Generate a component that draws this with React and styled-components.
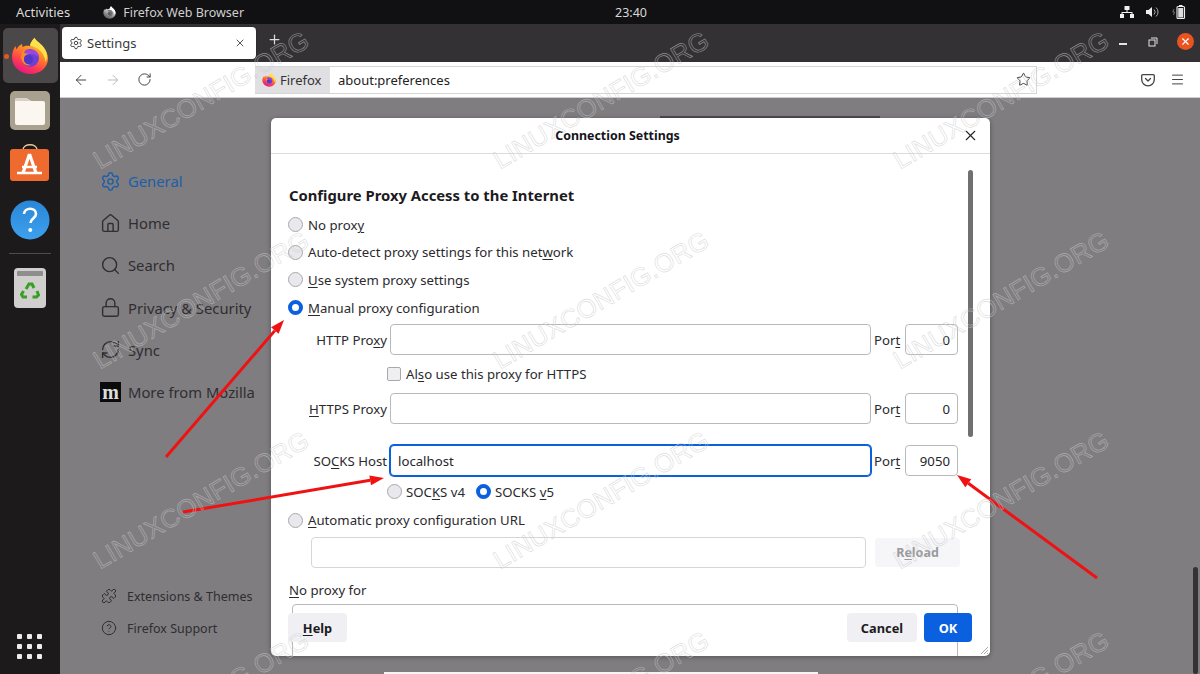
import React from "react";
import styled, { createGlobalStyle } from "styled-components";
import { Settings, House, Search, Lock, Puzzle, CircleHelp, ArrowLeft, ArrowRight, RotateCw, X, Plus, Star, Menu, RefreshCw } from "lucide-react";

const Global = createGlobalStyle`
  html, body { margin: 0; padding: 0; background: #111; }
  body { font-family: "Noto Sans", sans-serif; }
  * { box-sizing: border-box; }
  u { text-underline-offset: 2px; text-decoration-thickness: 1px; }
`;

const Screen = styled.div`
  position: relative; width: 1200px; height: 674px; overflow: hidden;
  display: flex; flex-direction: column; background: #7f7d80;
`;
const TopBar = styled.header`
  height: 24px; flex: none; background: #111012; color: #d8d8d8;
  display: grid; grid-template-columns: 1fr 1fr 1fr; align-items: center; font-size: 13px; padding: 0 14px 0 16px;
`;
const TopLeft = styled.div`display: flex; align-items: center; gap: 0;`;
const AppName = styled.div`display: flex; align-items: center; gap: 7px; margin-left: 33px; color: #cfcfcf; font-size: 12.5px;`;
const Clock = styled.div`text-align: center; padding-left: 60px; font-size: 12.5px;`;
const TopRight = styled.div`display: flex; justify-content: flex-end; align-items: center; gap: 12px; color: #eee;`;
const Row = styled.div`flex: 1; min-height: 0; display: flex;`;

const Dock = styled.nav`
  width: 60px; flex: none; background: #1c1a1b; display: flex; flex-direction: column; align-items: center; position: relative;
  padding-top: 4px;
`;
const ActiveTile = styled.div`
  width: 55px; height: 55px; border-radius: 5px; background: #4a4849; display: flex; align-items: center; justify-content: center; position: relative;
  &::before { content: ""; position: absolute; left: 1px; top: 26px; width: 5px; height: 5px; border-radius: 50%; background: #e95420; }
`;
const DockIcon = styled.div`margin-top: ${p => p.$top}px; display: flex; line-height: 0;`;
const DockRule = styled.div`width: 42px; height: 1px; background: #4e4c4d; margin-top: 13px;`;
const AppGrid = styled.div`
  position: absolute; left: 17px; bottom: 15px; display: grid; grid-template-columns: repeat(3, 5px); gap: 5px;
  span { width: 5px; height: 5px; background: #eee; border-radius: 1px; }
`;

const Browser = styled.div`flex: 1; min-width: 0; display: flex; flex-direction: column;`;
const TabStrip = styled.div`height: 38px; flex: none; background: #333134; display: flex; align-items: flex-start; padding: 3px 0 0 2px; color: #ddd;`;
const Tab = styled.div`
  width: 194px; height: 32px; background: #fff; border-radius: 4px; display: flex; align-items: center; padding: 0 10px 0 7px; gap: 4px;
  font-size: 13px; color: #3a3a3a; box-shadow: 0 0 2px rgba(0,0,0,.4);
`;
const TabTitle = styled.span`flex: 1;`;
const NewTab = styled.div`margin: 5px 0 0 11px; display: flex;`;
const WindowControls = styled.div`margin: 6px 6px 0 auto; display: flex; align-items: center; gap: 18px; color: #e4e4e4;`;
const MinBar = styled.div`width: 8px; height: 1.500px; background: #e4e4e4; margin: 5px 2px 0 0;`;
const CloseDot = styled.div`width: 17px; height: 17px; border-radius: 50%; background: #e95420; color: #fff; display: flex; align-items: center; justify-content: center;`;
const RestoreIcon = styled.div`width: 12px; height: 12px; display: flex;`;
const Toolbar = styled.div`
  height: 36px; flex: none; background: #fff; display: flex; align-items: center; padding: 0 15px 0 13px; color: #444; border-bottom: 1px solid #cfcfd2;
`;
const NavGroup = styled.div`display: flex; align-items: center; gap: 16px; width: 182px;`;
const UrlBar = styled.div`
  width: 782px; height: 28px; border: 1px solid #d5d5d8; border-left: 0; display: flex; align-items: stretch; font-size: 13px; color: #222; position: relative;
`;
const Identity = styled.div`width: 75px; background: #e0e0e3; display: flex; align-items: center; gap: 4px; padding-left: 7px; color: #333;`;
const UrlText = styled.div`display: flex; align-items: center; padding-left: 8px; flex: 1;`;
const StarWrap = styled.div`display: flex; align-items: center; padding-right: 5px; color: #333;`;
const ToolRight = styled.div`margin-left: auto; display: flex; align-items: center; gap: 15px;`;

const Content = styled.div`flex: 1; min-height: 0; display: flex; position: relative; background: #7f7d80;`;
const Sidebar = styled.aside`
  width: 210px; flex: none; padding: 62px 0 0 40px; display: flex; flex-direction: column; color: #2f2e31;
`;
const NavItem = styled.div`
  height: 42.200px; display: flex; align-items: center; gap: 7px; font-size: 14.800px; color: ${p => (p.$active ? "#1d5ea8" : "#2f2e31")};
`;
const MozMark = styled.span`
  width: 21px; height: 20px; background: #0b0b0b; color: #ddd; font: bold 20px/18px "Liberation Serif", serif; display: flex; align-items: center; justify-content: center;
`;
const SideFoot = styled.div`margin-top: auto; padding: 0 0 30px 1px; display: flex; flex-direction: column;`;
const FootItem = styled.div`height: 32px; display: flex; align-items: center; gap: 10px; font-size: 12.5px; color: #2f2e31;`;
const ScrollThumb = styled.div`position: absolute; right: 2px; bottom: 0; width: 5px; height: 107px; border-radius: 3px; background: #333;`;
const HiddenEdge = styled.div`position: absolute; left: 600px; top: 18px; width: 220px; height: 2px; background: #4e4c4f;`;
const BehindCard = styled.div`position: absolute; left: 324px; bottom: 0; width: 434px; height: 2px; background: #f4f4f4;`;

const Dialog = styled.section`
  position: absolute; left: 271px; top: 118px; width: 719px; height: 538px; background: #fff; border-radius: 5px; overflow: hidden;
  box-shadow: 0 1px 5px rgba(0,0,0,.35); color: #2b2a2e; font-size: 13.200px;
`;
const DialogHead = styled.div`
  height: 36px; border-bottom: 1px solid #dcdcdf; display: flex; align-items: center; justify-content: center; position: relative;
  font-size: 12.400px; font-weight: 700; color: #15141a; padding-right: 26px;
`;
const DialogClose = styled.div`position: absolute; right: 11px; top: 9px; display: flex; color: #222;`;
const DialogBody = styled.div`padding: 0 18px; display: flex; flex-direction: column; width: 100%;`;
const Heading = styled.h2`margin: 30px 0 0; height: 22px; font-size: 14.800px; line-height: 22px; font-weight: 700; color: #1c1b22;`;
const RadioRow = styled.label`display: flex; align-items: center; gap: 5px; height: ${p => p.$h || 27.6}px; margin: ${p => p.$top || 0}px 0 0 -1px;`;
const Radio = styled.span`
  width: 15px; height: 15px; flex: none; border-radius: 50%;
  border: ${p => (p.$on ? "4px solid #0a60df" : "1px solid #a9a9ad")};
  background: ${p => (p.$on ? "#fff" : "#e9e9ed")};
`;
const ProxyRow = styled.div`
  display: grid; grid-template-columns: 98px 481px 28px 53px; column-gap: 3px; align-items: center; height: 31px; margin-top: ${p => p.$top || 0}px;
`;
const RowLabel = styled.span`text-align: right; white-space: nowrap;`;
const TextBox = styled.div`
  height: ${p => p.$h || 31}px; border: 1px solid ${p => (p.$focus ? "#0a60df" : "#b9b9bd")}; border-radius: 4px; background: #fff;
  display: flex; align-items: center; padding: 0 7px; justify-content: ${p => (p.$end ? "flex-end" : "flex-start")};
  box-shadow: ${p => (p.$focus ? "0 0 0 1px #0a60df" : "none")}; color: #26252a;
`;
const CheckRow = styled.label`display: flex; align-items: center; gap: 5px; height: 38px; margin-left: 98px;`;
const CheckBox = styled.span`width: 14px; height: 14px; border: 1px solid #a9a9ad; border-radius: 2px; background: #efeff1;`;
const VersionRow = styled.div`display: flex; align-items: center; height: 30.500px; margin-left: 98px; gap: 11px;`;
const VersionItem = styled.label`display: flex; align-items: center; gap: 4px;`;
const UrlRow = styled.div`display: flex; align-items: center; margin: 3px 0 0 22px; gap: 9px;`;
const UrlField = styled(TextBox)`width: 555px; border-color: #d6d6d9;`;
const ReloadButton = styled.div`width: 85px; height: 29px; border-radius: 4px; background: #f6f6f8; color: #9a9a9e; font-weight: 700; font-size: 12.500px; display: flex; align-items: center; justify-content: center;`;
const NoProxyLabel = styled.div`height: 20px; line-height: 20px; margin-top: 12.500px;`;
const NoProxyBox = styled.div`height: 70px; margin: 4px 0 0 3px; width: 666px; border: 1px solid #b9b9bd; border-radius: 4px;`;
const DialogScroll = styled.div`position: absolute; left: 697px; top: 52px; width: 5px; height: 267px; border-radius: 3px; background: #707072;`;
const Footer = styled.div`position: absolute; left: 17px; right: 18px; top: 495px; display: flex; gap: 7px;`;
const Btn = styled.div`
  height: 29px; width: ${p => p.$w}px; border-radius: 4px; font-size: 12.800px; font-weight: 700; display: flex; align-items: center; justify-content: center;
  margin-right: ${p => (p.$push ? "auto" : 0)}; background: ${p => (p.$primary ? "#0a60df" : "#f0f0f4")}; color: ${p => (p.$primary ? "#fff" : "#1c1b22")};
`;
const Grip = styled.svg`position: absolute; right: 1px; bottom: 1px;`;

const ArrowLayer = styled.svg`position: absolute; inset: 0; pointer-events: none;`;
const Mark = styled.div`
  position: absolute; left: ${p => p.$x}px; top: ${p => p.$y}px; transform-origin: 0 100%; transform: rotate(-30.5deg);
  font: 400 25.800px/30px "Liberation Sans", sans-serif; white-space: nowrap; letter-spacing: .2px; color: rgba(255,255,255,.04);
  -webkit-text-stroke: .65px rgba(200,200,200,.62); pointer-events: none;
`;

function FirefoxLogo({ size = 38, gray }) {
  const id = gray ? "g" : "c";
  return (
    <svg width={size} height={size} viewBox="0 0 38 38" style={gray ? { filter: "grayscale(1) brightness(1.3)" } : undefined}>
      <defs>
        <linearGradient id={`fx-${id}-${size}`} x1="0.75" y1="0.05" x2="0.3" y2="1">
          <stop offset="0" stopColor="#ffd83b" />
          <stop offset="0.38" stopColor="#ff8a24" />
          <stop offset="0.72" stopColor="#ff3a52" />
          <stop offset="1" stopColor="#e31587" />
        </linearGradient>
      </defs>
      <path fill={`url(#fx-${id}-${size})`} d="M23.500 1c.8 3.800 4 5 7.500 8.500 4 4 6 8 6 12 0 9-7.800 15.500-17.500 15.500C9.500 37 1 30 1 20c0-4 1.200-8 3.500-11l1 3.500c1-2.500 3-4.500 5.500-5.500l.5 3c2.500-1.500 5-1.500 7.500-1 .5-3 2.500-6 4.500-8.500z" />
      <path fill="#ffe14d" d="M23.500 1c3 4 9 7 11.500 13 1.500 4 1.500 8-.5 11-.5-5-3-10-7.500-13-3-2-5.500-3-8-3.500 .5-3 2.500-5.500 4.500-7.500z" />
      <circle cx="19" cy="21" r="9" fill="#6d3fd6" />
      <path fill="#9a46e0" d="M12 15c3-3 9-3.500 13-.5 2 1.500 3 3.500 3 6-3-3-7-4-10-3.500-2 .3-4.500-.3-6-2z" />
      <path fill="#ff8a24" d="M10 20c0-4 2-7 5-8.500l-2 4.500 5 1c-3 .5-5 2-5 5 0 3 3 6 7 6-6 2-10-3-10-8z" />
      <circle cx="17.500" cy="22.500" r="4.500" fill="#4f37c8" />
    </svg>
  );
}

const Pocket = () => (
  <svg width="14" height="14" viewBox="0 0 14 14" fill="none" stroke="#444" strokeWidth="1.300" strokeLinecap="round" strokeLinejoin="round">
    <path d="M1.700 1.700h10.600a1 1 0 0 1 1 1v3.800a6.300 6.300 0 0 1-12.600 0V2.700a1 1 0 0 1 1-1z" />
    <path d="M4.500 5.500 7 8l2.500-2.500" />
  </svg>
);

const NetIcon = () => (
  <svg width="14" height="12" viewBox="0 0 14 12" fill="#f0f0f0">
    <rect x="4.500" y="0" width="5" height="4" />
    <rect x="0" y="8" width="4" height="4" />
    <rect x="10" y="8" width="4" height="4" />
    <path d="M6.500 4h1v2h5v2h-1V7h-9v1h-1V6h5z" />
  </svg>
);
const VolIcon = () => (
  <svg width="14" height="12" viewBox="0 0 14 12" fill="#eee">
    <path d="M0 4h2.500L6 1v10L2.500 8H0z" />
    <path d="M8 3.500a3.500 3.500 0 0 1 0 5M10 1.500a6 6 0 0 1 0 9" fill="none" stroke="#aaa" strokeWidth="1" />
  </svg>
);
const BatIcon = () => (
  <svg width="14" height="14" viewBox="0 0 14 14" fill="none">
    <path d="M2 4 .8 7H2.500L1.500 10" stroke="#888" strokeWidth=".8" />
    <rect x="5" y="1.500" width="7.500" height="12" rx="1" stroke="#eee" strokeWidth="1.100" />
    <rect x="7" y="0" width="3.500" height="1.500" fill="#eee" />
    <rect x="6.200" y="3" width="5" height="9.500" fill="#ddd" />
  </svg>
);

const FilesIcon = () => (
  <svg width="40" height="39" viewBox="0 0 40 39">
    <rect width="40" height="39" rx="5" fill="#a8a18f" />
    <path d="M5 9a2 2 0 0 1 2-2h9l5 3h12a2 2 0 0 1 2 2v20a2 2 0 0 1-2 2H7a2 2 0 0 1-2-2z" fill="#fbf6f0" />
    <path d="M5 9a2 2 0 0 1 2-2h9l5 3H5z" fill="#d9d2c8" />
  </svg>
);
const StoreIcon = () => (
  <svg width="40" height="38" viewBox="0 0 40 38">
    <path d="M13 6c0-7 14-7 14 0" fill="none" stroke="#e8c9a0" strokeWidth="1.500" />
    <rect y="5" width="39" height="32" rx="3" fill="#ee6a2e" />
    <path d="M19.500 10 13 29M19.500 10 26 29" stroke="#fff" strokeWidth="3.200" fill="none" />
    <path d="M7 29h25M12 23h15" stroke="#fff" strokeWidth="2.400" />
  </svg>
);
const HelpIcon = () => (
  <svg width="40" height="40" viewBox="0 0 40 40">
    <defs>
      <linearGradient id="help-b" x1="0" y1="0" x2="0" y2="1">
        <stop offset="0" stopColor="#2a86d6" />
        <stop offset="1" stopColor="#3da1ee" />
      </linearGradient>
    </defs>
    <circle cx="20" cy="20" r="19.500" fill="url(#help-b)" />
    <path d="M14 14c.5-7 12-7 12 0 0 4-5.500 4.500-5.500 9" fill="none" stroke="#fff" strokeWidth="2.600" />
    <circle cx="20.300" cy="30" r="2" fill="#fff" />
  </svg>
);
const TrashIcon = () => (
  <svg width="32" height="40" viewBox="0 0 32 40">
    <rect width="32" height="40" rx="4" fill="#d0cfcd" />
    <rect x="3" y="3" width="26" height="5" rx="1" fill="#8f8e8d" />
    <g fill="none" stroke="#35a024" strokeWidth="3">
      <path d="M12 21l3-5h3l2 4" />
      <path d="M23 23l1.500 4-2 2h-4" />
      <path d="M13 29H9l-1.500-2.500 2-3.500" />
    </g>
  </svg>
);

const Arrow = ({ x1, y1, x2, y2, w = 3, hl = 14, hw = 5 }) => {
  const a = Math.atan2(y2 - y1, x2 - x1);
  const bx = x2 - hl * Math.cos(a);
  const by = y2 - hl * Math.sin(a);
  const nx = -Math.sin(a) * hw;
  const ny = Math.cos(a) * hw;
  return (
    <g>
      <line x1={x1} y1={y1} x2={bx} y2={by} stroke="#f01212" strokeWidth={w} />
      <polygon fill="#f01212" points={`${x2},${y2} ${bx + nx},${by + ny} ${bx - nx},${by - ny}`} />
    </g>
  );
};

const nav = [
  { icon: <Settings size={21} strokeWidth={1.6} />, label: "General", active: true },
  { icon: <House size={21} strokeWidth={1.6} />, label: "Home" },
  { icon: <Search size={21} strokeWidth={1.6} />, label: "Search" },
  { icon: <Lock size={21} strokeWidth={1.6} />, label: "Privacy & Security" },
  { icon: <RefreshCw size={21} strokeWidth={1.6} />, label: "Sync" },
  { icon: <MozMark>m</MozMark>, label: "More from Mozilla" },
];

const marks = [];
[175, 375, 575, 775].forEach(y => [103, 503, 903].forEach(x => marks.push([x, y])));

export default function App() {
  return (
    <Screen>
      <Global />
      <TopBar>
        <TopLeft>
          Activities
          <AppName><FirefoxLogo size={13} gray />Firefox Web Browser</AppName>
        </TopLeft>
        <Clock>23:40</Clock>
        <TopRight><NetIcon /><VolIcon /><BatIcon /></TopRight>
      </TopBar>
      <Row>
        <Dock>
          <ActiveTile><FirefoxLogo /></ActiveTile>
          <DockIcon $top={8}><FilesIcon /></DockIcon>
          <DockIcon $top={14}><StoreIcon /></DockIcon>
          <DockIcon $top={18}><HelpIcon /></DockIcon>
          <DockRule />
          <DockIcon $top={14}><TrashIcon /></DockIcon>
          <AppGrid>{Array.from({ length: 9 }, (_, i) => <span key={i} />)}</AppGrid>
        </Dock>
        <Browser>
          <TabStrip>
            <Tab>
              <Settings size={14} color="#444" strokeWidth={1.7} />
              <TabTitle>Settings</TabTitle>
              <X size={12} color="#555" />
            </Tab>
            <NewTab><Plus size={15} /></NewTab>
            <WindowControls>
              <MinBar />
              <RestoreIcon>
                <svg width="12" height="12" viewBox="0 0 12 12" fill="none" stroke="#e4e4e4"><rect x="2" y="4" width="6" height="6" /><path d="M4 2h6v6" /></svg>
              </RestoreIcon>
              <CloseDot><X size={11} strokeWidth={2.5} /></CloseDot>
            </WindowControls>
          </TabStrip>
          <Toolbar>
            <NavGroup>
              <ArrowLeft size={16} strokeWidth={1.5} />
              <ArrowRight size={16} strokeWidth={1.5} color="#bbb" />
              <RotateCw size={15} strokeWidth={1.6} />
            </NavGroup>
            <UrlBar>
              <Identity><FirefoxLogo size={14} />Firefox</Identity>
              <UrlText>about:preferences</UrlText>
              <StarWrap><Star size={15} strokeWidth={1.5} /></StarWrap>
            </UrlBar>
            <ToolRight>
              <Pocket />
              <Menu size={15} strokeWidth={1.6} />
            </ToolRight>
          </Toolbar>
          <Content>
            <HiddenEdge />
            <BehindCard />
            <Sidebar>
              {nav.map(n => (
                <NavItem key={n.label} $active={n.active}>{n.icon}{n.label}</NavItem>
              ))}
              <SideFoot>
                <FootItem><Puzzle size={16} strokeWidth={1.5} />Extensions &amp; Themes</FootItem>
                <FootItem><CircleHelp size={16} strokeWidth={1.5} />Firefox Support</FootItem>
              </SideFoot>
            </Sidebar>
            <ScrollThumb />
          </Content>
        </Browser>
      </Row>

      <Dialog>
        <DialogHead>
          Connection Settings
          <DialogClose><X size={17} strokeWidth={1.5} /></DialogClose>
        </DialogHead>
        <DialogBody>
          <Heading>Configure Proxy Access to the Internet</Heading>
          <RadioRow $top={5}><Radio /><span>No prox<u>y</u></span></RadioRow>
          <RadioRow><Radio /><span>Auto-detect proxy settings for this net<u>w</u>ork</span></RadioRow>
          <RadioRow><Radio /><span><u>U</u>se system proxy settings</span></RadioRow>
          <RadioRow><Radio $on /><span><u>M</u>anual proxy configuration</span></RadioRow>
          <ProxyRow $top={3}>
            <RowLabel>HTTP Pro<u>x</u>y</RowLabel>
            <TextBox />
            <span>Por<u>t</u></span>
            <TextBox $end>0</TextBox>
          </ProxyRow>
          <CheckRow><CheckBox /><span>Al<u>s</u>o use this proxy for HTTPS</span></CheckRow>
          <ProxyRow>
            <RowLabel><u>H</u>TTPS Proxy</RowLabel>
            <TextBox />
            <span>Por<u>t</u></span>
            <TextBox $end>0</TextBox>
          </ProxyRow>
          <ProxyRow $top={21}>
            <RowLabel>SO<u>C</u>KS Host</RowLabel>
            <TextBox $focus>localhost</TextBox>
            <span>Por<u>t</u></span>
            <TextBox $end>9050</TextBox>
          </ProxyRow>
          <VersionRow>
            <VersionItem><Radio /><span>SOC<u>K</u>S v4</span></VersionItem>
            <VersionItem><Radio $on /><span>SOCKS <u>v</u>5</span></VersionItem>
          </VersionRow>
          <RadioRow $h={27}><Radio /><span><u>A</u>utomatic proxy configuration URL</span></RadioRow>
          <UrlRow>
            <UrlField />
            <ReloadButton><span>R<u>e</u>load</span></ReloadButton>
          </UrlRow>
          <NoProxyLabel><u>N</u>o proxy for</NoProxyLabel>
          <NoProxyBox />
        </DialogBody>
        <DialogScroll />
        <Footer>
          <Btn $w={59} $push><span><u>H</u>elp</span></Btn>
          <Btn $w={70}>Cancel</Btn>
          <Btn $w={48} $primary>OK</Btn>
        </Footer>
        <Grip width="9" height="9" viewBox="0 0 9 9" stroke="#aaa"><path d="M8 1 1 8M8 4 4 8M8 7 7 8" /></Grip>
      </Dialog>

      <ArrowLayer width="1200" height="674">
        <Arrow x1={166} y1={457} x2={284} y2={320} />
        <Arrow x1={183} y1={512} x2={384} y2={478} />
        <Arrow x1={1097} y1={578} x2={957} y2={475} />
      </ArrowLayer>
      {marks.map(([x, y]) => <Mark key={`${x}-${y}`} $x={x} $y={y - 30}>LINUXCONFIG.ORG</Mark>)}
    </Screen>
  );
}
